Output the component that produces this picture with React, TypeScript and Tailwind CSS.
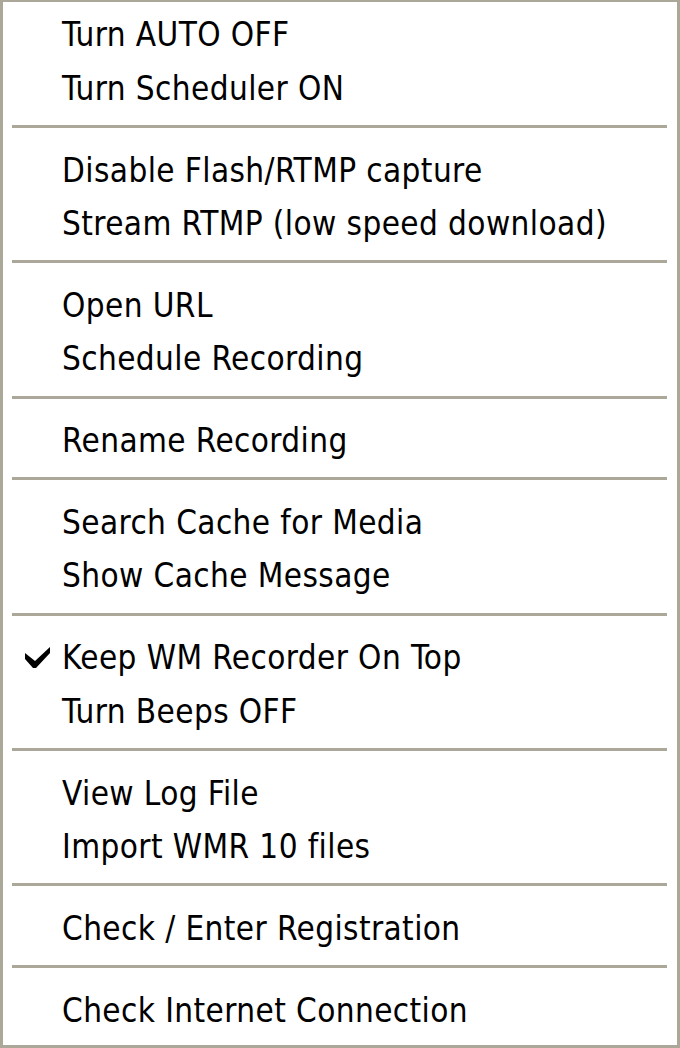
const groups: { label: string; checked?: boolean }[][] = [
  [{ label: 'Turn AUTO OFF' }, { label: 'Turn Scheduler ON' }],
  [{ label: 'Disable Flash/RTMP capture' }, { label: 'Stream RTMP (low speed download)' }],
  [{ label: 'Open URL' }, { label: 'Schedule Recording' }],
  [{ label: 'Rename Recording' }],
  [{ label: 'Search Cache for Media' }, { label: 'Show Cache Message' }],
  [{ label: 'Keep WM Recorder On Top', checked: true }, { label: 'Turn Beeps OFF' }],
  [{ label: 'View Log File' }, { label: 'Import WMR 10 files' }],
  [{ label: 'Check / Enter Registration' }],
  [{ label: 'Check Internet Connection' }],
];

function CheckMark() {
  return (
    <svg width="28" height="28" viewBox="0 0 28 28" className="absolute left-[20px] top-[12px]">
      <path d="M2 10 L2 16 L10 25 L13 25 L27 10 L27 4 L12 18 Z" fill="#000" />
    </svg>
  );
}

function MenuItem({ label, checked }: { label: string; checked?: boolean }) {
  return (
    <div className="relative flex h-[53.5px] items-center pl-[59px] text-[33px] leading-none tracking-[0.4px] text-black">
      {checked ? <CheckMark /> : null}
      <span>{label}</span>
    </div>
  );
}

function Separator() {
  return (
    <div className="h-[28.3px] pt-[10px] pl-[9px] pr-[10px]">
      <div className="h-[3px] bg-[#aca899]" />
    </div>
  );
}

export default function App() {
  return (
    <div
      className="h-[1048px] w-[680px] overflow-hidden border-t-2 border-r-[3px] border-b-[3px] border-l-[3px] border-[#aca899] bg-white pt-[6px] pb-[8px]"
      style={{ fontFamily: '"DejaVu Sans Condensed", "Liberation Sans", Arial, sans-serif' }}
    >
      {groups.map((group, gi) => (
        <div key={gi}>
          {gi > 0 ? <Separator /> : null}
          {group.map((item) => (
            <MenuItem key={item.label} label={item.label} checked={item.checked} />
          ))}
        </div>
      ))}
    </div>
  );
}
